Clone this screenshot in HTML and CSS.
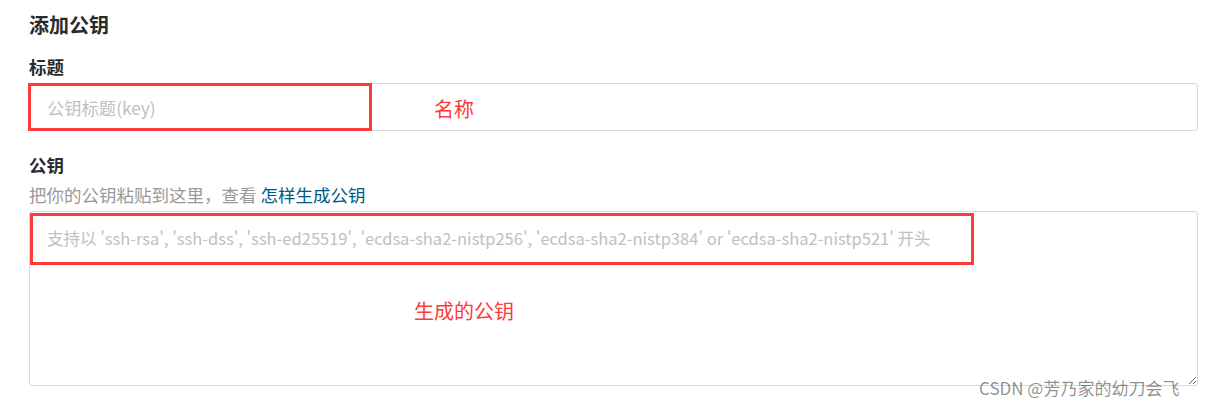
FILE: index.html
```html
<!DOCTYPE html>
<html lang="zh-CN">
<head>
<meta charset="utf-8">
<title>添加公钥</title>
<link rel="stylesheet" href="styles.css">
</head>
<body>
<div class="page">
  <h1 class="title">添加公钥</h1>
  <div class="field">
    <label class="label">标题</label>
    <input class="input" type="text" placeholder="公钥标题(key)">
  </div>
  <div class="field field-key">
    <label class="label">公钥</label>
    <div class="help">把你的公钥粘贴到这里，查看 <a class="link" href="#">怎样生成公钥</a></div>
    <textarea class="textarea" placeholder="支持以 'ssh-rsa', 'ssh-dss', 'ssh-ed25519', 'ecdsa-sha2-nistp256', 'ecdsa-sha2-nistp384' or 'ecdsa-sha2-nistp521' 开头"></textarea>
  </div>

  <div class="mark mark-title"></div>
  <div class="note note-title">名称</div>
  <div class="mark mark-key"></div>
  <div class="note note-key">生成的公钥</div>
  <div class="watermark">CSDN @芳乃家的幼刀会飞</div>
</div>
</body>
</html>
```

FILE: styles.css
```css
* { box-sizing: border-box; }
html, body { margin: 0; padding: 0; background: #fff; }
body {
  font-family: "Microsoft YaHei", "Noto Sans CJK SC", "Noto Sans", sans-serif;
  color: #333;
}
.page {
  position: relative;
  width: 1226px;
  height: 407px;
  padding: 12px 28px 0 29px;
  overflow: hidden;
}
.title {
  margin: 0;
  font-size: 20px;
  line-height: 26px;
  font-weight: bold;
  color: #2b2b2b;
}
.field { display: flex; flex-direction: column; }
.field .label {
  margin-top: 17px;
  font-size: 17.5px;
  line-height: 24px;
  font-weight: bold;
  color: #2b2b2b;
}
.input {
  margin-top: 4px;
  height: 48px;
  width: 1169px;
  border: 1px solid #d9d9de;
  border-radius: 3px;
  padding: 0 17px;
  font-family: inherit;
  font-size: 17.3px;
  color: #333;
  outline: none;
}
.input::placeholder, .textarea::placeholder { color: #c0c0c0; }
.field-key .label { margin-top: 22px; }
.help {
  margin-top: 5px;
  font-size: 17.5px;
  line-height: 26px;
  color: #999;
}
.link { color: #005980; text-decoration: none; }
.textarea {
  margin-top: 3px;
  width: 1169px;
  height: 175px;
  border: 1px solid #d9d9de;
  border-radius: 3px;
  padding: 14px 17px;
  font-family: inherit;
  font-size: 16.5px;
  line-height: 24px;
  color: #333;
  outline: none;
  resize: vertical;
}
.mark {
  position: absolute;
  border: 3px solid #fe3a3a;
}
.mark-title { left: 28px; top: 83px; width: 344px; height: 48px; }
.mark-key { left: 30px; top: 213px; width: 944px; height: 52px; }
.note {
  position: absolute;
  font-size: 20px;
  line-height: 24px;
  color: #fe3a3a;
}
.note-title { left: 434px; top: 97px; }
.note-key { left: 414px; top: 299px; }
.watermark {
  position: absolute;
  left: 979px;
  top: 376px;
  font-size: 17px;
  line-height: 24px;
  color: rgba(0, 0, 0, 0.45);
  white-space: nowrap;
}
```
